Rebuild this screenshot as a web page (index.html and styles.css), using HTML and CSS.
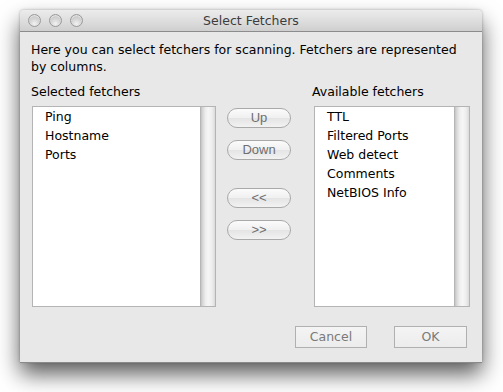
FILE: index.html
```html
<!DOCTYPE html>
<html>
<head>
<meta charset="utf-8">
<link rel="stylesheet" href="styles.css">
</head>
<body>
<div class="window">
  <div class="titlebar">
    <div class="lights">
      <span class="light"></span><span class="light"></span><span class="light"></span>
    </div>
    <div class="title">Select Fetchers</div>
  </div>
  <div class="content">
    <p class="intro">Here you can select fetchers for scanning. Fetchers are represented by columns.</p>
    <div class="columns">
      <div class="col col-left">
        <div class="label">Selected fetchers</div>
        <div class="list">
          <ul class="items">
            <li>Ping</li>
            <li>Hostname</li>
            <li>Ports</li>
          </ul>
          <div class="track"></div>
        </div>
      </div>
      <div class="col-mid">
        <button class="pill">Up</button>
        <button class="pill">Down</button>
        <button class="pill pill-gap">&lt;&lt;</button>
        <button class="pill">&gt;&gt;</button>
      </div>
      <div class="col col-right">
        <div class="label">Available fetchers</div>
        <div class="list">
          <ul class="items">
            <li>TTL</li>
            <li>Filtered Ports</li>
            <li>Web detect</li>
            <li>Comments</li>
            <li>NetBIOS Info</li>
          </ul>
          <div class="track"></div>
        </div>
      </div>
    </div>
    <div class="footer">
      <button class="sq sq-cancel">Cancel</button>
      <button class="sq sq-ok">OK</button>
    </div>
  </div>
</div>
</body>
</html>
```

FILE: styles.css
```css
html, body {
  margin: 0;
  padding: 0;
  background: #ffffff;
}
body {
  font-family: "DejaVu Sans", "Noto Sans", sans-serif;
  font-size: 12px;
  color: #000;
  min-height: 392px;
  padding-top: 10px;
  box-sizing: border-box;
}
.window {
  width: 462px;
  height: 352px;
  margin: 0 0 0 20px;
  background: #e8e8e8;
  border-radius: 4px 4px 0 0;
  box-shadow: 0 1px 0 #8a8a8a, 0 12px 22px rgba(0,0,0,0.65), 0 0 3px rgba(0,0,0,0.3);
  display: flex;
  flex-direction: column;
}
.titlebar {
  height: 21px;
  border-bottom: 1px solid #8c8c8c;
  border-radius: 4px 4px 0 0;
  background: linear-gradient(to bottom, #ececec 0%, #dedede 50%, #cfcfcf 100%);
  position: relative;
  display: flex;
  align-items: center;
  justify-content: center;
}
.lights {
  position: absolute;
  left: 8px;
  top: 4px;
  display: flex;
  gap: 8px;
}
.light {
  width: 13px;
  height: 13px;
  border-radius: 50%;
  box-sizing: border-box;
  border: 1px solid #9a9a9a;
  background: radial-gradient(circle at 50% 80%, #f2f2f2 0%, #d6d6d6 45%, #bdbdbd 100%);
  box-shadow: inset 0 1px 1px rgba(255,255,255,0.6);
}
.title {
  color: #3c3c3c;
  font-size: 12.5px;
  line-height: 21px;
}
.content {
  flex: 1;
  display: flex;
  flex-direction: column;
  padding: 0 15px 0 11px;
}
.intro {
  margin: 9px 0 0 0;
  line-height: 17px;
  font-size: 12.5px;
}
.columns {
  display: flex;
  margin-top: 8px;
}
.label {
  font-size: 12.5px;
  line-height: 17px;
  margin-bottom: 6px;
}
.col-left {
  width: 185px;
}
.col-left .list {
  margin-left: 1px;
  width: 184px;
}
.col-right {
  margin-left: 21px;
}
.col-right .list {
  margin-left: 2px;
  width: 156px;
}
.list {
  box-sizing: border-box;
  height: 201px;
  background: #fff;
  border: 1px solid #b4b4b4;
  display: flex;
}
.items {
  list-style: none;
  margin: 0;
  padding: 0 0 0 12px;
  flex: 1;
}
.items li {
  font-size: 12.5px;
  line-height: 19px;
  height: 19px;
}
.track {
  width: 15px;
  background: linear-gradient(to right, #acacac 0%, #cfcfcf 12%, #ececec 35%, #f6f6f6 55%, #eeeeee 80%, #dadada 100%);
}
.col-mid {
  display: flex;
  flex-direction: column;
  width: 64px;
  margin-left: 11px;
  padding-top: 25px;
}
.pill {
  width: 64px;
  height: 20px;
  box-sizing: border-box;
  border-radius: 10px;
  border: 1px solid #a9a9a9;
  background: linear-gradient(to bottom, #fbfbfb 0%, #f0f0f0 50%, #e4e4e4 51%, #f2f2f2 100%);
  color: #6f6f6f;
  font-family: "Liberation Sans", Arial, sans-serif;
  font-size: 13px;
  padding: 0;
  margin-bottom: 12px;
  line-height: 18px;
}
.pill-gap {
  margin-top: 16px;
}
.footer {
  display: flex;
  justify-content: flex-end;
  margin-top: 19px;
}
.sq {
  height: 22px;
  box-sizing: border-box;
  border: 1px solid #b0b0b0;
  background: linear-gradient(to bottom, #f4f4f4 0%, #ececec 100%);
  color: #7a7a7a;
  font-family: "DejaVu Sans", sans-serif;
  font-size: 12.5px;
  padding: 0;
  line-height: 20px;
}
.sq-cancel {
  width: 72px;
}
.sq-ok {
  width: 73px;
  margin-left: 27px;
}
```
